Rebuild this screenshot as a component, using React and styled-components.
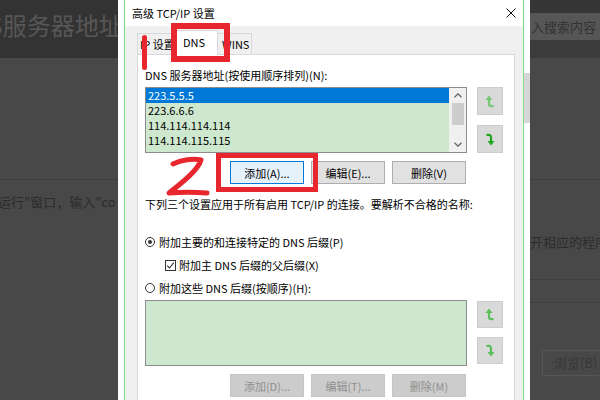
import React from 'react';
import styled, { createGlobalStyle } from 'styled-components';

const GlobalStyle = createGlobalStyle`
  html, body { margin: 0; padding: 0; width: 600px; height: 400px; overflow: hidden; background: #484848; }
  body { font-family: "Noto Sans CJK SC", "Noto Sans", sans-serif; }
  * { box-sizing: border-box; }
`;

const Page = styled.div`
  position: relative;
  width: 600px;
  height: 400px;
  overflow: hidden;
  display: flex;
`;

/* ---------- dimmed web page behind ---------- */
const LeftBg = styled.div`
  width: 118px;
  flex: none;
  display: flex;
  flex-direction: column;
  background: #484848;
  overflow: hidden;
`;
const TopBand = styled.div`
  height: 58px;
  flex: none;
  background: #333333;
  padding-top: 12px;
  overflow: hidden;
`;
const BigText = styled.div`
  font-size: 24px;
  line-height: 26px;
  color: #575757;
  white-space: nowrap;
  margin-left: -29px;
`;
const BgSection = styled.div`
  height: ${p => p.$h}px;
  flex: none;
  border-bottom: ${p => (p.$line ? '1px solid #3e3e3e' : 'none')};
  background: ${p => p.$bg || 'transparent'};
`;
const BgText = styled.div`
  font-size: 13px;
  line-height: 18px;
  color: #2c2c2c;
  white-space: nowrap;
  margin-top: ${p => p.$mt || 0}px;
  margin-left: ${p => p.$ml || 0}px;
`;
const Strip = styled.div`
  width: 6px;
  flex: none;
  background: #ffffff;
  display: flex;
  flex-direction: column;
`;
const StripThumb = styled.div`
  margin-top: 73px;
  height: 50px;
  background: #d6d6d6;
`;
const RightBg = styled.div`
  flex: 1;
  display: flex;
  flex-direction: column;
  background: #484848;
  overflow: hidden;
`;
const SearchBox = styled.div`
  height: 27px;
  flex: none;
  background: #565656;
  display: flex;
  align-items: center;
  padding-left: 1px;
  font-size: 13px;
  color: #333;
  white-space: nowrap;
`;
const BgButton = styled.div`
  margin: ${p => p.$mt}px 0 0 12px;
  height: 26px;
  width: 80px;
  border: 1px solid #555;
  font-size: 13px;
  line-height: 24px;
  padding-left: 11px;
  color: #363636;
  white-space: nowrap;
`;

/* ---------- dialog ---------- */
const Dialog = styled.div`
  width: 400px;
  flex: none;
  height: 400px;
  border-left: 1px solid #86d986;
  border-right: 1px solid #86d986;
  background: #f0f0f0;
  display: flex;
  flex-direction: column;
  color: #000;
  font-size: 11px;
`;
const TitleBar = styled.div`
  height: 26px;
  flex: none;
  background: #ffffff;
  display: flex;
  align-items: center;
  justify-content: space-between;
  padding: 0 7px 0 7px;
  font-size: 11px;
  line-height: 14px;
`;
const DialogBody = styled.div`
  flex: 1;
  display: flex;
  flex-direction: column;
  padding: 0 8px 0 12px;
`;
const TabRow = styled.div`
  height: 28px;
  flex: none;
  display: flex;
  align-items: flex-end;
`;
const Tab = styled.div`
  position: relative;
  width: ${p => p.$w}px;
  height: ${p => (p.$active ? 25 : 21)}px;
  margin-bottom: ${p => (p.$active ? -1 : 0)}px;
  margin-left: -1px;
  z-index: ${p => (p.$active ? 2 : 1)};
  background: ${p => (p.$active ? '#ffffff' : '#f0f0f0')};
  border: 1px solid #d9d9d9;
  border-bottom: none;
  padding-left: ${p => p.$pl}px;
  line-height: ${p => (p.$active ? 22 : 20)}px;
  font-size: 11px;
  white-space: nowrap;
  &:first-child { margin-left: 0; }
`;
const Panel = styled.div`
  flex: 1;
  background: #ffffff;
  border: 1px solid #d9d9d9;
  border-bottom: none;
  padding: 13px 0 0 7px;
  display: flex;
  flex-direction: column;
`;
const Label = styled.div`
  line-height: 14px;
  height: 14px;
  white-space: nowrap;
  margin-top: ${p => p.$mt || 0}px;
  padding-left: ${p => p.$indent || 0}px;
  display: flex;
  align-items: center;
  gap: ${p => p.$gap || 0}px;
`;
const ListRow = styled.div`
  display: flex;
  margin-top: 5px;
`;
const ListBox = styled.div`
  width: 322px;
  height: 66px;
  border: 1px solid #8d8d8d;
  background: #cde8cf;
  display: flex;
  overflow: hidden;
`;
const Items = styled.div`
  flex: 1;
  display: flex;
  flex-direction: column;
`;
const Item = styled.div`
  height: 15px;
  flex: none;
  line-height: 15px;
  padding-left: 2px;
  font-size: 11px;
  background: ${p => (p.$sel ? '#0078d7' : 'transparent')};
  color: ${p => (p.$sel ? '#ffffff' : '#000')};
`;
const ScrollBar = styled.div`
  width: 17px;
  flex: none;
  background: #f0f0f0;
  display: flex;
  flex-direction: column;
  align-items: center;
`;
const ScrollArrow = styled.div`
  height: 15px;
  flex: none;
  display: flex;
  align-items: center;
  justify-content: center;
  width: 100%;
`;
const ScrollThumb = styled.div`
  width: 12px;
  height: 22px;
  background: #cdcdcd;
`;
const ScrollTrack = styled.div`
  flex: 1;
`;
const SideCol = styled.div`
  display: flex;
  flex-direction: column;
  gap: ${p => p.$gap}px;
  margin-left: 10px;
  padding-top: ${p => p.$pt || 0}px;
`;
const SideButton = styled.div`
  width: 26px;
  height: ${p => p.$h}px;
  background: #d9d9d9;
  border: 1px solid #cdcdcd;
  display: flex;
  align-items: center;
  justify-content: center;
`;
const ButtonRow = styled.div`
  width: 321px;
  display: flex;
  justify-content: flex-end;
  gap: 7px;
  margin-top: 8px;
`;
const Button = styled.div`
  width: 74px;
  height: 23px;
  display: flex;
  align-items: center;
  justify-content: center;
  font-size: 11px;
  white-space: nowrap;
  background: ${p => (p.$focus ? '#e5f1fb' : p.$disabled ? '#cccccc' : '#e1e1e1')};
  border: 1px solid ${p => (p.$focus ? '#0078d7' : p.$disabled ? '#c4c4c4' : '#adadad')};
  color: ${p => (p.$disabled ? '#8e8e8e' : '#000')};
`;
const Radio = styled.span`
  width: 10px;
  height: 10px;
  border: 1px solid #333;
  border-radius: 50%;
  display: inline-flex;
  align-items: center;
  justify-content: center;
  flex: none;
  &::after {
    content: '';
    width: 4px;
    height: 4px;
    border-radius: 50%;
    background: ${p => (p.$on ? '#333' : 'transparent')};
  }
`;
const Check = styled.span`
  width: 11px;
  height: 11px;
  border: 1px solid #333;
  display: inline-flex;
  align-items: center;
  justify-content: center;
  flex: none;
  background: #fff;
`;

/* ---------- red annotations (overlay) ---------- */
const RedFrame = styled.div`
  position: absolute;
  left: ${p => p.$x}px;
  top: ${p => p.$y}px;
  width: ${p => p.$w}px;
  height: ${p => p.$h}px;
  border: ${p => p.$t}px solid #e8262d;
  pointer-events: none;
  z-index: 10;
`;
const RedBar = styled.div`
  position: absolute;
  left: 142px;
  top: 35px;
  width: 5px;
  height: 35px;
  border-radius: 3px;
  background: #e8262d;
  z-index: 10;
`;
const RedDigit = styled.svg`
  position: absolute;
  left: 163px;
  top: 153px;
  z-index: 10;
`;

const Chevron = ({ down }) => (
  <svg width="8" height="5" viewBox="0 0 8 5">
    <polyline
      points={down ? '0.5,0.8 4,4.2 7.5,0.8' : '0.5,4.2 4,0.8 7.5,4.2'}
      fill="none"
      stroke="#606060"
      strokeWidth="1.2"
    />
  </svg>
);

const MoveIcon = ({ down, color }) => (
  <svg width="10" height="13" viewBox="0 0 10 13" style={down ? { transform: 'rotate(180deg)' } : undefined}>
    <polygon points="4,0.5 0.5,5 7.5,5" fill={color} />
    <path d="M4 4.5 V8.8 Q4 11.2 6.5 11.2 H8.5" fill="none" stroke={color} strokeWidth="2.2" />
  </svg>
);

const CloseIcon = () => (
  <svg width="10" height="10" viewBox="0 0 10 10">
    <path d="M0.5 0.5 L9.5 9.5 M9.5 0.5 L0.5 9.5" stroke="#111" strokeWidth="1" />
  </svg>
);

const servers = ['223.5.5.5', '223.6.6.6', '114.114.114.114', '114.114.115.115', '180.76.76.76'];

export default function App() {
  return (
    <>
      <GlobalStyle />
      <Page>
        <LeftBg>
          <TopBand>
            <BigText>NS服务器地址</BigText>
          </TopBand>
          <BgSection $h={122} $line />
          <BgText $mt={13} $ml={-2}>运行"窗口，输入"co</BgText>
        </LeftBg>
        <Strip />
        <Dialog>
          <TitleBar>
            <span>高级 TCP/IP 设置</span>
            <CloseIcon />
          </TitleBar>
          <DialogBody>
            <TabRow>
              <Tab $w={40} $pl={2}>IP 设置</Tab>
              <Tab $w={42} $pl={6} $active>DNS</Tab>
              <Tab $w={35} $pl={4}>WINS</Tab>
            </TabRow>
            <Panel>
              <Label>DNS 服务器地址(按使用顺序排列)(N):</Label>
              <ListRow>
                <ListBox>
                  <Items>
                    {servers.map((s, i) => (
                      <Item key={s} $sel={i === 0}>{s}</Item>
                    ))}
                  </Items>
                  <ScrollBar>
                    <ScrollArrow><Chevron /></ScrollArrow>
                    <ScrollThumb />
                    <ScrollTrack />
                    <ScrollArrow><Chevron down /></ScrollArrow>
                  </ScrollBar>
                </ListBox>
                <SideCol $gap={10}>
                  <SideButton $h={28}><MoveIcon color="#74c874" /></SideButton>
                  <SideButton $h={28}><MoveIcon down color="#1fa51f" /></SideButton>
                </SideCol>
              </ListRow>
              <ButtonRow>
                <Button $focus>添加(A)...</Button>
                <Button>编辑(E)...</Button>
                <Button>删除(V)</Button>
              </ButtonRow>
              <Label $mt={13}>下列三个设置应用于所有启用 TCP/IP 的连接。要解析不合格的名称:</Label>
              <Label $mt={24} $gap={4}>
                <Radio $on />
                附加主要的和连接特定的 DNS 后缀(P)
              </Label>
              <Label $mt={9} $indent={20} $gap={3}>
                <Check>
                  <svg width="9" height="9" viewBox="0 0 9 9">
                    <path d="M1.2 4.6 L3.5 7 L7.8 1.6" fill="none" stroke="#333" strokeWidth="1.1" />
                  </svg>
                </Check>
                附加主 DNS 后缀的父后缀(X)
              </Label>
              <Label $mt={9} $gap={4}>
                <Radio />
                附加这些 DNS 后缀(按顺序)(H):
              </Label>
              <ListRow>
                <ListBox />
                <SideCol $gap={9} $pt={1}>
                  <SideButton $h={27}><MoveIcon color="#5cbf5c" /></SideButton>
                  <SideButton $h={27}><MoveIcon down color="#5cbf5c" /></SideButton>
                </SideCol>
              </ListRow>
              <ButtonRow>
                <Button $disabled>添加(D)...</Button>
                <Button $disabled>编辑(T)...</Button>
                <Button $disabled>删除(M)</Button>
              </ButtonRow>
            </Panel>
          </DialogBody>
        </Dialog>
        <Strip>
          <StripThumb />
        </Strip>
        <RightBg>
          <BgSection $h={13} $bg="#363636" />
          <SearchBox>入搜索内容</SearchBox>
          <BgSection $h={18} $bg="#3b3b3b" />
          <BgSection $h={122} $line />
          <BgText $mt={53}>开相应的程序</BgText>
          <BgSection $h={29} $line />
          <BgSection $h={23} $line />
          <BgButton $mt={47}>浏览(B)</BgButton>
        </RightBg>

        <RedBar />
        <RedFrame $x={171} $y={23} $w={59} $h={39} $t={6} />
        <RedFrame $x={216} $y={153} $w={102} $h={39} $t={5} />
        <RedDigit width="48" height="46" viewBox="0 0 48 46">
          <path
            d="M10 11 C18 7, 30 5, 38 7 C35 17, 20 29, 6 40 C18 39, 32 39, 44 40"
            fill="none"
            stroke="#e8262d"
            strokeWidth="5"
            strokeLinecap="round"
            strokeLinejoin="round"
          />
        </RedDigit>
      </Page>
    </>
  );
}
